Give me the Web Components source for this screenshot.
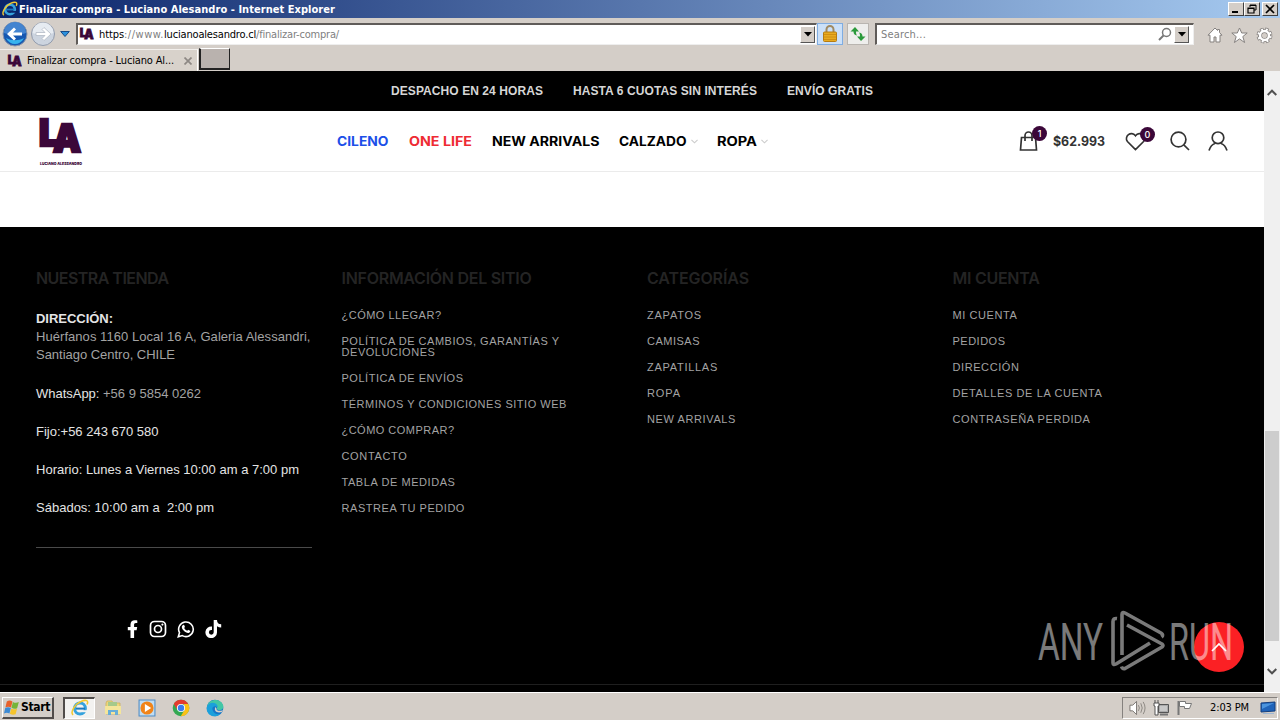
<!DOCTYPE html>
<html lang="es">
<head>
<meta charset="utf-8">
<title>Finalizar compra - Luciano Alesandro</title>
<style>
  body {
    margin: 0;
    width: 1280px;
    height: 720px;
    overflow: hidden;
    font-family: "Liberation Sans", Arial, sans-serif;
  }
</style>
</head>
<body>
<desktop-screen>
  <title-bar><fit-text w="316">Finalizar compra - Luciano Alesandro - Internet Explorer</fit-text></title-bar>
  <address-bar></address-bar>
  <tab-strip><fit-text w="147">Finalizar compra - Luciano Al...</fit-text></tab-strip>
  <store-page></store-page>
  <task-bar></task-bar>
</desktop-screen>

<script>
const ICONS = {
  ie: '<svg viewBox="0 0 18 18"><circle cx="9" cy="9.5" r="5.4" fill="none" stroke="#35a2dd" stroke-width="3"/><path d="M5 9.6h9" stroke="#1d79be" stroke-width="2"/><path d="M11 11.2h7v2h-7z" fill="var(--hole,#0a246a)"/><path d="M2 16C-1 13 4 5 10 2.5 15 .2 18 1.500 16 5.500" fill="none" stroke="#f1c832" stroke-width="1.600"/></svg>',
  back: '<svg viewBox="0 0 26 26"><circle cx="13" cy="13" r="12" fill="#1658b1" stroke="#8997ab"/><path d="M2 12a11 11 0 0 1 22 0c-6 2-15 2-22 0" fill="#4384d0"/><path d="M4 17c4 8 14 8 18 0-5 3-13 3-18 0" fill="#36b3ed"/><path d="M5 13l7-6.500 2 2-3 3h9v3h-9l3 3-2 2z" fill="#fff"/></svg>',
  forward: '<svg viewBox="0 0 26 26"><circle cx="13" cy="13" r="11.500" fill="#ccd4df" stroke="#929bac"/><path d="M2.500 12a10.500 10.500 0 0 1 21 0c-6 2-15 2-21 0" fill="#e6ebf1"/><path d="M21 13l-7-6.500-2 2 3 3H6v3h9l-3 3 2 2z" fill="#fff" stroke="#b3bac5" stroke-width=".8"/></svg>',
  lock: '<svg viewBox="0 0 14 17"><path d="M3.500 8V4.500a3.500 3.500 0 0 1 7 0V8" fill="none" stroke="#a08a62" stroke-width="2"/><rect x=".5" y="7" width="13" height="9.500" rx="1" fill="#e8ab20" stroke="#b67c10"/><path d="M1 9.500h12M1 12h12M1 14.500h12" stroke="#c9880f" stroke-width=".8"/></svg>',
  refresh: '<svg viewBox="0 0 16 16"><path d="M5 1L.5 5.500h3c0 2.500 1 3.500 3.500 4-1-1.200-1-2.500-1-4h3zM11 15l4.500-4.500h-3c0-2.500-1-3.500-3.500-4 1 1.200 1 2.500 1 4H7z" fill="#2b9a3b"/></svg>',
  lens: '<svg viewBox="0 0 14 14"><circle cx="8.500" cy="5.500" r="4" fill="none" stroke="#777" stroke-width="1.500"/><path d="M5.500 8.500L1 13" stroke="#777" stroke-width="2"/></svg>',
  home: '<svg viewBox="0 0 16 16"><path d="M8 1L1 8.200h2V15h4v-5h2v5h4V8.200h2L12.500 5.500V2.500h-2V3.500z" fill="#fff" stroke="#85817f"/></svg>',
  star: '<svg viewBox="0 0 17 17"><path d="M8.500 1l2.200 5h5.500l-4.400 3.600 1.800 5.900-5.100-3.600-5.100 3.600 1.800-5.900L.8 6h5.500z" fill="#fff" stroke="#85817f"/></svg>',
  gear: '<svg viewBox="0 0 18 18"><circle cx="9" cy="9" r="6.700" fill="none" stroke="#85817f" stroke-width="3.400" stroke-dasharray="3.400 1.860"/><circle cx="9" cy="9" r="4.800" fill="none" stroke="#85817f" stroke-width="4.200"/><circle cx="9" cy="9" r="6.300" fill="none" stroke="#fff" stroke-width="2.600" stroke-dasharray="2 2.948" stroke-dashoffset="-.6"/><circle cx="9" cy="9" r="4.700" fill="none" stroke="#fff" stroke-width="2.600"/></svg>',
  bag: '<svg viewBox="0 0 20 22"><path d="M2.500 7.500h14l1 12.500h-16zM6 11V5.700a3.500 3.700 0 0 1 7 0V11" fill="none" stroke="#333" stroke-width="1.700"/></svg>',
  heart: '<svg viewBox="0 0 22 20"><path d="M11 18.500L2.500 10C-1.500 5 6.500-2 11 4c4.500-6 12.500 1 8.500 6z" fill="none" stroke="#333" stroke-width="1.700"/></svg>',
  search: '<svg viewBox="0 0 20 20"><circle cx="8.500" cy="8.500" r="7.400" fill="none" stroke="#333" stroke-width="1.700"/><path d="M13.800 13.800L19 19" stroke="#333" stroke-width="1.700"/></svg>',
  user: '<svg viewBox="0 0 20 20"><circle cx="10" cy="6.800" r="5.800" fill="none" stroke="#333" stroke-width="1.700"/><path d="M1 19.500c1.400-4.200 4-6.500 6-7M19 19.500c-1.400-4.200-4-6.500-6-7" fill="none" stroke="#333" stroke-width="1.700"/></svg>',
  facebook: '<svg viewBox="0 0 12 18"><path d="M3.500 18v-7.700H.8V7h2.700V4.600C3.500 1.700 5.200.2 7.800.2c1.200 0 2.500.2 2.500.2v2.700H8.900C7.500 3.100 7.100 3.900 7.100 4.800V7h3.100l-.6 3.300H7.100V18z" fill="#fff"/></svg>',
  instagram: '<svg viewBox="0 0 18 18"><rect x="1.500" y="1.500" width="15" height="15" rx="4" fill="none" stroke="#fff" stroke-width="1.700"/><circle cx="9" cy="9" r="3.500" fill="none" stroke="#fff" stroke-width="1.700"/><circle cx="13.400" cy="4.600" r="1.100" fill="#fff"/></svg>',
  whatsapp: '<svg viewBox="0 0 18 18"><path d="M1.300 16.800l1.200-4.100A7.300 7.300 0 1 1 5.300 15.600z" fill="none" stroke="#fff" stroke-width="1.600"/><path d="M6.300 4.900c.5-.2.900 0 1.100.6l.5 1.200c.1.500-.7 1-.7 1.300.7 1.400 1.700 2.200 3 2.700.4 0 .8-1 1.300-.8l1.600.8c.5.300-.1 1.600-.9 2-2.700 1.200-7.400-2.700-7.400-5.600 0-1 .7-2 1.500-2.200z" fill="#fff"/></svg>',
  tiktok: '<svg viewBox="0 0 17 18"><path d="M12 0H8.700v12.300a2.400 2.400 0 1 1-2.400-2.400l.7.100V6.600A5.800 5.800 0 1 0 12 12.400V6.200a7 7 0 0 0 4.200 1.400V4.300A4.300 4.300 0 0 1 12 0z" fill="#fff"/></svg>',
  windows: '<svg viewBox="0 0 16 16"><path d="M3 1.500q3-2 6 0L7.500 8q-3-1.500-6 0z" fill="#e7602b"/><path d="M9.500 2q3 1.700 6.300.2L14 8.700q-3 1.300-6-.4z" fill="#76b43a"/><path d="M1.300 8.500q3-1.700 6 0L5.800 14.500Q3 12.900 0 14.500z" fill="#3c8ad4"/><path d="M7.800 9q3 1.700 6.100.2l-1.500 6q-3 1.200-6.100-.5z" fill="#f5c42c"/></svg>',
  folder: '<svg viewBox="0 0 18 18"><path d="M2 4l1-2h5l1 2h7v11H2z" fill="#ecd67c" stroke="#c8ac54" stroke-width=".7"/><path d="M4 3h9v4H4z" fill="#a5c98b"/><path d="M1 7h16v8H1z" fill="#f4e59b"/><path d="M4 16v-5h10v5h-3v-3H7v3z" fill="#68aed8"/></svg>',
  player: '<svg viewBox="0 0 17 17"><path d="M1 1h15v15H1z" fill="#c1ddf2" stroke="#4f8cc6"/><circle cx="8.500" cy="8.500" r="6.200" fill="#f18419"/><path d="M6.500 4.800l6 3.700-6 3.700z" fill="#fff"/></svg>',
  chrome: '<svg viewBox="0 0 18 18"><circle cx="9" cy="9" r="8.300" fill="#34a853"/><path d="M1.800 4.900A8.300 8.300 0 0 1 16.200 5H9L5.500 11z" fill="#e33b2e"/><path d="M16.200 5A8.300 8.300 0 0 1 8.700 17.300L12.500 11 12 5z" fill="#fbc116"/><circle cx="9" cy="9" r="4.100" fill="#fff"/><circle cx="9" cy="9" r="3.200" fill="#3b7ded"/></svg>',
  edge: '<svg viewBox="0 0 18 18"><circle cx="9" cy="9" r="8.300" fill="#1676c8"/><path d="M1 8C2 2 7 .4 11 1c5 1 8 6 5.500 9-2 2-6 1-5.500-.5C12 6 5 4 1 8z" fill="#43c7a5"/><path d="M1 8C3 2 11 3 12 8c-4-2-7 0-5 4 1 3 5 4 8 2.500C8 21-1 15 1 8z" fill="#1ba0db"/><path d="M10.500 9.500c-.5 2.500 3.500 3 6.500 1.500l-1.200 2C10.500 14.500 7.500 11.500 9.500 8z" fill="#d4d0c8"/></svg>',
  sound: '<svg viewBox="0 0 18 16"><path d="M1 5h3l4-4v14l-4-4H1z" fill="#fff" stroke="#77736e"/><path d="M10 5q2 3 0 6M12.500 3q3 5 0 10M15 1.500q4 6.500 0 13" fill="none" stroke="#898580"/></svg>',
  network: '<svg viewBox="0 0 17 16"><path d="M5.500 4.500h10v8h-10z" fill="#aaa" stroke="#555"/><path d="M7 6h7v5H7z" fill="#c8c8c8"/><path d="M7 14.500h8" stroke="#777" stroke-width="2"/><path d="M1 3h5v3H5v9H2V6H1zM2 0v3M5 0v3" fill="#fff" stroke="#555"/></svg>',
  flag: '<svg viewBox="0 0 16 16"><path d="M1.500 1v14" stroke="#777" stroke-width="2"/><path d="M2.500 1.500h6v2h6l-2 5h-5v-2h-5z" fill="#fff" stroke="#777"/></svg>',
  monitor: '<svg viewBox="0 0 16 14"><path d="M1 2l14-1v9L1 11z" fill="#1f63b9" stroke="#153e7c"/><path d="M2 3l12-1-12 6z" fill="#4b94dd"/><path d="M3 12.500h11" stroke="#9db7d4"/></svg>',
  minimize: '<svg viewBox="0 0 12 10"><path d="M2 8h6" stroke="#000" stroke-width="2"/></svg>',
  restore: '<svg viewBox="0 0 12 10"><path d="M4 3V1h6v5H8M4 1.500h6" fill="none" stroke="#000"/><path d="M2 4h6v5H2zM2 4.500h6" fill="none" stroke="#000" stroke-width="1.200"/></svg>',
  close: '<svg viewBox="0 0 12 10"><path d="M2 1l8 8M10 1L2 9" stroke="#000" stroke-width="1.700"/></svg>',
  tabclose: '<svg viewBox="0 0 8 8"><path d="M.5.5l7 7M7.500.5l-7 7" stroke="#8d8884" stroke-width="1.700"/></svg>',
  down: '<svg viewBox="0 0 8 5"><path d="M0 0h8L4 4.500z" fill="#000"/></svg>',
  bluedown: '<svg viewBox="0 0 10 6"><path d="M.7.5h8.600L5 5.500z" fill="#2b91dd" stroke="#174c89"/></svg>',
  chevron: '<svg viewBox="0 0 8 5"><path d="M.5.700L4 4 7.500.7" fill="none" stroke="#ccc" stroke-width="1.300"/></svg>',
  scrollup: '<svg viewBox="0 0 10 7"><path d="M.7 6L5 1.700 9.300 6" fill="none" stroke="#505050" stroke-width="2"/></svg>',
  scrolldown: '<svg viewBox="0 0 10 7"><path d="M.7 1L5 5.300 9.300 1" fill="none" stroke="#505050" stroke-width="2"/></svg>',
  totop: '<svg viewBox="0 0 16 10"><path d="M1 9l7-7 7 7" fill="none" stroke="#fff" stroke-width="1.700"/></svg>'
};

const UI_FONT = 'font-family: "DejaVu Sans Condensed", "DejaVu Sans", sans-serif; font-size: 11px; font-stretch: condensed;';

class BaseElement extends HTMLElement {
  constructor() {
    super();
    this._shadowRoot = this.attachShadow({ mode: 'open' });
  }

  connectedCallback() {
    this._shadowRoot.innerHTML = `<style>:host, * { box-sizing: border-box; }</style>${this.template()}`;
  }
}

class SvgIcon extends BaseElement {
  template() {
    const w = this.getAttribute('w');
    const h = this.getAttribute('h') || w;
    return `<style>
        :host { display: block; flex: none; width: ${w}px; height: ${h}px; }
        svg { display: block; width: 100%; height: 100%; }
      </style>${ICONS[this.getAttribute('name')]}`;
  }
}

// Spreads the letters of its text over the width in "w",
// or widens the letters themselves when "stretch" is set.
class FitText extends BaseElement {
  template() {
    return `<style>
        :host { display: inline-block; flex: none; white-space: pre; }
        span { display: inline-block; transform-origin: 0 50%; }
      </style><span><slot></slot></span>`;
  }

  connectedCallback() {
    super.connectedCallback();
    const width = Number(this.getAttribute('w'));
    const span = this._shadowRoot.querySelector('span');
    const natural = span.getBoundingClientRect().width;
    if (this.hasAttribute('stretch')) {
      span.style.transform = `scaleX(${(width / natural).toFixed(4)})`;
    } else {
      const space = (width - natural) / this.textContent.length;
      this.style.letterSpacing = `${space.toFixed(3)}px`;
    }
    this.style.width = `${width}px`;
  }
}

class BrandMark extends BaseElement {
  template() {
    const caption = this.hasAttribute('caption');
    return `<style>
        :host { display: block; flex: none; }
        svg { display: block; overflow: visible; }
        text { font-family: Inter, sans-serif; font-weight: 900; fill: #3b0739; }
        .mark { stroke: #3b0739; stroke-width: 2.5; }
      </style>
      <svg width="${this.getAttribute('w')}" height="${this.getAttribute('h')}" viewBox="${this.getAttribute('box')}">
        <text class="mark" x="-1" y="28" font-size="37" textLength="20" lengthAdjust="spacingAndGlyphs">L</text>
        <text class="mark" x="13" y="34" font-size="38" textLength="28" lengthAdjust="spacingAndGlyphs">A</text>
        ${caption ? '<text x="0" y="46.800" style="font-size:4px" textLength="42" lengthAdjust="spacingAndGlyphs">LUCIANO ALESSANDRO</text>' : ''}
      </svg>`;
  }
}

class DesktopScreen extends BaseElement {
  template() {
    return `<style>
        :host { display: flex; flex-direction: column; width: 1280px; height: 720px; background: #d4cec8; }
      </style><slot></slot>`;
  }
}

class TitleBar extends BaseElement {
  template() {
    return `<style>
        :host {
          display: flex; flex: none; align-items: center; height: 18px; padding: 0 2px; color: #fff;
          background: linear-gradient(90deg, #0a246a, #a6caf0);
          ${UI_FONT} font-weight: bold;
        }
        slot { display: block; margin-left: 1px; }
        .buttons { display: flex; margin-left: auto; }
        .buttons span {
          display: flex; align-items: center; justify-content: center; width: 16px; height: 14px;
          background: #d4cec8; border: 1px solid; border-color: #fff #404040 #404040 #fff;
        }
        .buttons span:last-child { margin-left: 2px; }
      </style>
      <svg-icon name="ie" w="16"></svg-icon>
      <slot></slot>
      <div class="buttons">
        <span><svg-icon name="minimize" w="12" h="10"></svg-icon></span>
        <span><svg-icon name="restore" w="12" h="10"></svg-icon></span>
        <span><svg-icon name="close" w="12" h="10"></svg-icon></span>
      </div>`;
  }
}

class AddressBar extends BaseElement {
  template() {
    return `<style>
        :host { display: flex; flex: none; align-items: center; height: 31px; padding: 0 7px 0 2px; ${UI_FONT} color: #808080; }
        .field {
          display: flex; align-items: center; height: 22px; background: #fff;
          border: 1px solid; border-width: 2px 1px 1px 2px; border-color: #605c59 #eee #eee #605c59;
        }
        .url { width: 741px; margin-left: 6px; padding: 0 1px 0 2px; }
        .url brand-mark { margin-right: 5px; }
        .search { width: 319px; margin-left: 6px; padding: 0 4px; }
        b { font-weight: normal; color: #000; display: flex; }
        .drop {
          display: flex; align-items: center; justify-content: center; width: 15px; height: 17px;
          background: #d4cec8; border: 1px solid; border-color: #fff #555 #555 #fff;
        }
        .url .drop { margin-left: auto; }
        .search svg-icon[name="lens"] { margin-left: auto; margin-right: 2px; }
        .tool { display: flex; align-items: center; justify-content: center; height: 22px; border: 1px solid #b9b5b0; background: #eeeeec; }
        .lock { width: 26px; background: #cbe0f8; border-color: #7fade2; }
        .reload { width: 22px; margin-left: 4px; }
        .links { display: flex; align-items: center; gap: 8px; margin: 3px 0 0 auto; }
      </style>
      <svg-icon name="back" w="26"></svg-icon>
      <svg-icon name="forward" w="26" style="margin-left:2px"></svg-icon>
      <svg-icon name="bluedown" w="10" h="6" style="margin-left:4px"></svg-icon>
      <div class="field url">
        <brand-mark w="14" h="12" box="0 0 42 36"></brand-mark>
        <b><fit-text w="25">https</fit-text></b><fit-text w="40">://www.</fit-text><b><fit-text w="92">lucianoalesandro.cl</fit-text></b><fit-text w="83">/finalizar-compra/</fit-text>
        <span class="drop"><svg-icon name="down" w="8" h="5"></svg-icon></span>
      </div>
      <div class="tool lock"><svg-icon name="lock" w="14" h="17"></svg-icon></div>
      <div class="tool reload"><svg-icon name="refresh" w="16"></svg-icon></div>
      <div class="field search">
        <fit-text w="45">Search...</fit-text>
        <svg-icon name="lens" w="14"></svg-icon>
        <span class="drop"><svg-icon name="down" w="8" h="5"></svg-icon></span>
      </div>
      <div class="links">
        <svg-icon name="home" w="16"></svg-icon>
        <svg-icon name="star" w="17"></svg-icon>
        <svg-icon name="gear" w="17"></svg-icon>
      </div>`;
  }
}

class TabStrip extends BaseElement {
  template() {
    return `<style>
        :host { display: flex; flex: none; height: 22px; ${UI_FONT} color: #000; }
        .tab { display: flex; align-items: center; width: 198px; padding: 0 5px 0 8px; background: #d8d2cb; border-top: 1px solid #f2efec; border-right: 1px solid #fff; }
        .tab brand-mark { margin-right: 5px; }
        .tab svg-icon { margin-left: auto; }
        .new { width: 31px; height: 22px; margin: -1px 0 0 1px; background: #b9b2ae; border: 1px solid #222; border-top-color: #fff; border-width: 1px 1px 2px 2px; }
      </style>
      <div class="tab">
        <brand-mark w="14" h="12" box="0 0 42 36"></brand-mark>
        <slot></slot>
        <svg-icon name="tabclose" w="8"></svg-icon>
      </div>
      <div class="new"></div>`;
  }
}

class ShopHeader extends BaseElement {
  template() {
    return `<style>
        :host { display: block; color: #000; font-family: Inter, sans-serif; font-size: 13px; font-weight: 700; }
        .promo {
          display: flex; justify-content: center; align-items: center; gap: 30px; height: 40px;
          background: #000; color: #d6d6d6; font: bold 12px "Liberation Sans", Arial, sans-serif;
        }
        .bar { display: grid; grid-template-columns: 297px 1fr 246px; height: 61px; padding: 0 0 0 40px; border-bottom: 1px solid #ebebeb; }
        brand-mark { padding-top: 7px; }
        nav, .tools, .item { display: flex; align-items: center; }
        nav { gap: 20px; }
        .item { gap: 4px; }
        .item:last-child { margin-left: -1px; }
        .tools { color: #333; padding-left: 1px; }
        .counted { position: relative; }
        .badge {
          position: absolute; top: -5px; right: -12px; width: 15px; height: 15px; border-radius: 50%;
          background: #3b0739; color: #fff; font-size: 9px; font-weight: 500; line-height: 15px; text-align: center;
        }
      </style>
      <div class="promo">
        <fit-text w="152">DESPACHO EN 24 HORAS</fit-text>
        <fit-text w="184">HASTA 6 CUOTAS SIN INTERÉS</fit-text>
        <fit-text w="86">ENVÍO GRATIS</fit-text>
      </div>
      <div class="bar">
        <brand-mark w="42" h="48" box="0 0 42 48" caption></brand-mark>
        <nav>
          <fit-text stretch w="51.500" style="color:#1c4fe8">CILENO</fit-text>
          <fit-text stretch w="63" style="color:#ee2b33">ONE LIFE</fit-text>
          <fit-text stretch w="107.500">NEW ARRIVALS</fit-text>
          <span class="item"><fit-text stretch w="67.500">CALZADO</fit-text><svg-icon name="chevron" w="7" h="5"></svg-icon></span>
          <span class="item"><fit-text stretch w="40">ROPA</fit-text><svg-icon name="chevron" w="7" h="5"></svg-icon></span>
        </nav>
        <div class="tools">
          <span class="counted" style="margin-right:14px"><svg-icon name="bag" w="20" h="22"></svg-icon><span class="badge" style="right:-8px;top:-4px">1</span></span>
          <fit-text stretch w="52">$62.993</fit-text>
          <span class="counted" style="margin:0 24px 0 20px"><svg-icon name="heart" w="21" h="19"></svg-icon><span class="badge" style="right:-9px">0</span></span>
          <svg-icon name="search" w="20"></svg-icon>
          <svg-icon name="user" w="20" style="margin-left:18px"></svg-icon>
        </div>
      </div>`;
  }
}

class LinkColumn extends BaseElement {
  template() {
    return `<style>
        :host { display: block; color: #a3a3a3; font-size: 11px; line-height: 11px; }
        h5 { margin: 0 0 21px; height: 22px; font: 600 16px/22px Inter, sans-serif; color: #242424; }
        .links { display: flex; flex-direction: column; gap: 15px; align-items: flex-start; }
        ::slotted(div) { display: flex; flex-direction: column; align-items: flex-start; }
      </style>
      <h5><fit-text w="${this.getAttribute('w')}">${this.getAttribute('heading')}</fit-text></h5>
      <div class="links"><slot></slot></div>`;
  }
}

class StoreInfo extends BaseElement {
  template() {
    return `<style>
        :host { display: block; width: 276px; color: #e4e4e4; font-size: 13px; line-height: 18px; }
      </style><slot></slot>`;
  }
}

class ShopFooter extends BaseElement {
  template() {
    return `<style>
        :host { display: flex; flex-direction: column; height: 465px; background: #000; }
        .columns { display: grid; grid-template-columns: repeat(4, 276px); column-gap: 29.5px; height: 458px; padding: 40px 36px 0; border-bottom: 1px solid #1f1f1f; }
        p { margin: 0 0 20px; }
        .muted { color: #a3a3a3; }
        .rule { height: 1px; margin-top: 30px; background: #4a4a4a; }
        .social { display: flex; align-items: center; justify-content: center; gap: 10px; margin-top: 72px; }
      </style>
      <div class="columns">
        <link-column heading="NUESTRA TIENDA" w="132.500">
          <store-info>
            <p><b><fit-text w="77">DIRECCIÓN:</fit-text></b><br>
            <span class="muted"><fit-text w="274.500">Huérfanos 1160 Local 16 A, Galeria Alessandri,</fit-text><br>
            <fit-text w="139">Santiago Centro, CHILE</fit-text></span></p>
            <p style="margin-top:21px"><fit-text w="67">WhatsApp: </fit-text><span class="muted"><fit-text w="98">+56 9 5854 0262</fit-text></span></p>
            <p><fit-text w="122.500">Fijo:+56 243 670 580</fit-text></p>
            <p><fit-text w="263">Horario: Lunes a Viernes 10:00 am a 7:00 pm</fit-text></p>
            <p><fit-text w="178">Sábados: 10:00 am a  2:00 pm</fit-text></p>
            <div class="rule"></div>
            <div class="social">
              <svg-icon name="facebook" w="12" h="18"></svg-icon>
              <svg-icon name="instagram" w="18"></svg-icon>
              <svg-icon name="whatsapp" w="18"></svg-icon>
              <svg-icon name="tiktok" w="17" h="18"></svg-icon>
            </div>
          </store-info>
        </link-column>
        <link-column heading="INFORMACIÓN DEL SITIO" w="190">
          <fit-text w="100">¿CÓMO LLEGAR?</fit-text>
          <div><fit-text w="218">POLÍTICA DE CAMBIOS, GARANTÍAS Y</fit-text><fit-text w="94">DEVOLUCIONES</fit-text></div>
          <fit-text w="122">POLÍTICA DE ENVÍOS</fit-text>
          <fit-text w="225.500">TÉRMINOS Y CONDICIONES SITIO WEB</fit-text>
          <fit-text w="113">¿CÓMO COMPRAR?</fit-text>
          <fit-text w="66">CONTACTO</fit-text>
          <fit-text w="114">TABLA DE MEDIDAS</fit-text>
          <fit-text w="123.500">RASTREA TU PEDIDO</fit-text>
        </link-column>
        <link-column heading="CATEGORÍAS" w="102">
          <fit-text w="55">ZAPATOS</fit-text>
          <fit-text w="53">CAMISAS</fit-text>
          <fit-text w="71">ZAPATILLAS</fit-text>
          <fit-text w="34">ROPA</fit-text>
          <fit-text w="89">NEW ARRIVALS</fit-text>
        </link-column>
        <link-column heading="MI CUENTA" w="87">
          <fit-text w="65">MI CUENTA</fit-text>
          <fit-text w="53">PEDIDOS</fit-text>
          <fit-text w="67">DIRECCIÓN</fit-text>
          <fit-text w="150">DETALLES DE LA CUENTA</fit-text>
          <fit-text w="138">CONTRASEÑA PERDIDA</fit-text>
        </link-column>
      </div>`;
  }
}

class StorePage extends BaseElement {
  template() {
    return `<style>
        :host { position: relative; display: grid; flex: none; grid-template-columns: 1264px 16px; height: 621px; background: #fff; }
        .blank { height: 55px; }
        .scroll { display: flex; flex-direction: column; align-items: center; padding: 18px 0 17px; background: #f0f0f0; }
        .thumb { width: 14px; height: 210px; margin-top: 335px; background: #cdcdcd; }
        .scroll svg-icon:last-child { margin-top: auto; }
        .top {
          position: absolute; left: 1194px; top: 551px; width: 50px; height: 50px; border-radius: 50%;
          display: flex; align-items: center; justify-content: center; background: #fb2024;
        }
        .mark { position: absolute; left: 1036px; top: 536px; opacity: .48; }
      </style>
      <main>
        <shop-header></shop-header>
        <div class="blank"></div>
        <shop-footer></shop-footer>
      </main>
      <div class="scroll">
        <svg-icon name="scrollup" w="10" h="7"></svg-icon>
        <div class="thumb"></div>
        <svg-icon name="scrolldown" w="10" h="7"></svg-icon>
      </div>
      <div class="top"><svg-icon name="totop" w="16" h="10"></svg-icon></div>
      <svg class="mark" width="200" height="68" viewBox="0 0 200 68" fill="#fff" font-family="Roboto, sans-serif" font-size="52" font-weight="400">
        <text x="2" y="52.500" textLength="65" lengthAdjust="spacingAndGlyphs">ANY</text>
        <text x="133" y="52.500" textLength="64" lengthAdjust="spacingAndGlyphs">RUN</text>
        <g fill="none" stroke="#fff" stroke-width="3.600" stroke-linejoin="round">
          <path d="M86 48V7.500q0-3 3-1.500L125 26q3 2 .5 4"/>
          <path d="M81 11.500q-4-.5-4 3V56q0 2.500 3 1L114 36"/>
          <path d="M91 18l35 19q2 1.500 0 3L89 61.500q-2.500 1-3.500-2"/>
        </g>
      </svg>`;
  }
}

class TaskBar extends BaseElement {
  template() {
    return `<style>
        :host { display: flex; flex: none; align-items: center; height: 28px; padding: 2px 2px 0; border-top: 1px solid #fff; ${UI_FONT} color: #000; }
        .start {
          display: flex; align-items: center; gap: 2px; width: 52px; height: 22px; padding-left: 1px; font-size: 12px; font-weight: bold;
          border: 1px solid; border-width: 1px 2px 2px 1px; border-color: #fff #504c4a #504c4a #fff;
        }
        .active {
          --hole: #f3f2f0; display: flex; align-items: center; justify-content: center; width: 32px; height: 22px; margin-left: 9px;
          background: #f3f2f0; border: 1px solid; border-width: 2px 1px 1px 2px; border-color: #504c4a #fff #fff #504c4a;
        }
        .apps { display: flex; gap: 16px; margin-left: 9px; }
        .tray { display: flex; align-items: center; height: 22px; width: 156px; margin-left: auto; padding: 0 1px 0 6px; border: 1px solid; border-color: #85817e #fff #fff #85817e; }
        .tray fit-text { margin-left: auto; margin-right: 11px; }
      </style>
      <div class="start"><svg-icon name="windows" w="15"></svg-icon><fit-text w="29">Start</fit-text></div>
      <div class="active"><svg-icon name="ie" w="18"></svg-icon></div>
      <div class="apps">
        <svg-icon name="folder" w="18"></svg-icon>
        <svg-icon name="player" w="18"></svg-icon>
        <svg-icon name="chrome" w="18"></svg-icon>
        <svg-icon name="edge" w="18"></svg-icon>
      </div>
      <div class="tray">
        <svg-icon name="sound" w="17" h="16"></svg-icon>
        <svg-icon name="network" w="17" h="16" style="margin-left:7px"></svg-icon>
        <svg-icon name="flag" w="16" style="margin-left:7px"></svg-icon>
        <fit-text w="39">2:03 PM</fit-text>
        <svg-icon name="monitor" w="16" h="14"></svg-icon>
      </div>`;
  }
}

customElements.define('svg-icon', SvgIcon);
customElements.define('brand-mark', BrandMark);
customElements.define('desktop-screen', DesktopScreen);
customElements.define('title-bar', TitleBar);
customElements.define('address-bar', AddressBar);
customElements.define('tab-strip', TabStrip);
customElements.define('shop-header', ShopHeader);
customElements.define('store-info', StoreInfo);
customElements.define('link-column', LinkColumn);
customElements.define('shop-footer', ShopFooter);
customElements.define('store-page', StorePage);
customElements.define('task-bar', TaskBar);
// Measured last, once every parent has its fonts in place.
customElements.define('fit-text', FitText);
</script>
</body>
</html>
